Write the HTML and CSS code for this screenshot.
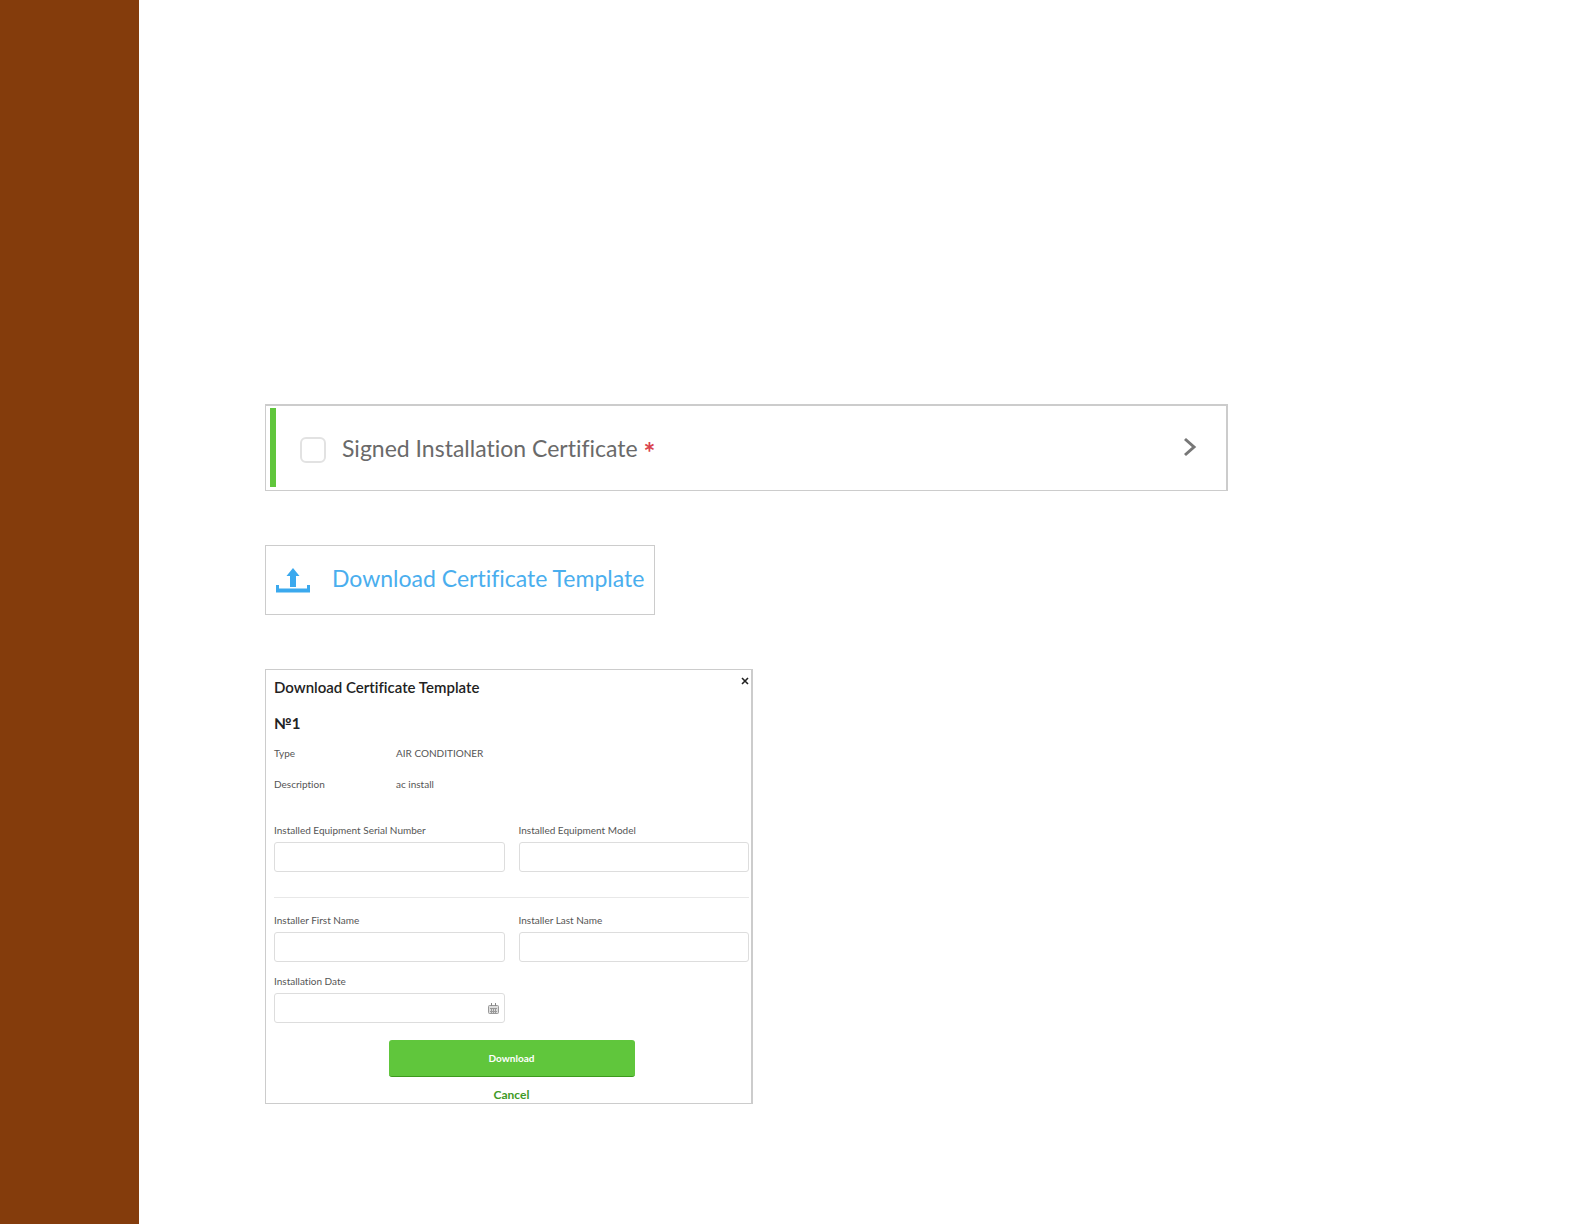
FILE: index.html
```html
<!DOCTYPE html>
<html lang="en">
<head>
<meta charset="utf-8">
<title>Download Certificate Template</title>
<link rel="stylesheet" href="styles.css">
</head>
<body>
<div class="page">
  <aside class="stripe"></aside>
  <main class="content">
    <section class="panel task">
      <span class="task-mark"></span>
      <input class="task-check" type="checkbox" id="signed">
      <label class="task-label" for="signed">Signed Installation Certificate <span class="required">*</span></label>
      <button class="icon-button task-open" type="button" aria-label="Open">
        <svg width="14" height="20" viewBox="0 0 14 20"><path d="M2 2l9 8-9 8" fill="none" stroke="#777" stroke-width="3"/></svg>
      </button>
    </section>

    <section class="panel template">
      <svg class="template-icon" width="34" height="26" viewBox="0 0 34 26" fill="#3ba9ee"><path d="M17 1l6.500 8H20v11h-6V9h-3.500z"/><path d="M0 18h3v3.500h28V18h3v7.500H0z"/></svg>
      <a class="template-link" href="#download-form">Download Certificate Template</a>
    </section>

    <form class="panel dialog" id="download-form">
      <header class="dialog-head">
        <h1 class="heading">Download Certificate Template</h1>
        <button class="icon-button dialog-close" type="button" aria-label="Close">
          <svg width="8" height="8" viewBox="0 0 8 8"><path d="M1 1l6 6M7 1L1 7" stroke="#222" stroke-width="1.600"/></svg>
        </button>
      </header>
      <h2 class="heading number">№1</h2>
      <dl class="facts">
        <dt>Type</dt><dd>AIR CONDITIONER</dd>
        <dt>Description</dt><dd>ac install</dd>
      </dl>
      <div class="fields equipment">
        <div class="field"><label for="serial">Installed Equipment Serial Number</label><input class="box" id="serial" type="text"></div>
        <div class="field"><label for="model">Installed Equipment Model</label><input class="box" id="model" type="text"></div>
      </div>
      <div class="fields installer">
        <div class="field"><label for="first">Installer First Name</label><input class="box" id="first" type="text"></div>
        <div class="field"><label for="last">Installer Last Name</label><input class="box" id="last" type="text"></div>
        <div class="field">
          <label for="date">Installation Date</label>
          <div class="box date">
            <input class="date-input" id="date" type="text">
            <button class="icon-button" type="button" aria-label="Choose date">
              <svg width="11" height="11" viewBox="0 0 11 11"><rect x="0.500" y="2.500" width="10" height="8" rx="1" fill="#ddd" stroke="#999"/><path d="M3.500 0v3M7.500 0v3" stroke="#888"/><path d="M2 5.500h7M2 8.500h7M3.500 5v5M5.500 5v5M7.500 5v5" stroke="#999"/></svg>
            </button>
          </div>
        </div>
      </div>
      <div class="actions">
        <button class="download" type="submit">Download</button>
        <button class="cancel" type="button">Cancel</button>
      </div>
    </form>
  </main>
</div>
</body>
</html>
```
FILE: styles.css
```css
* { box-sizing: border-box; }
body {
  margin: 0;
  background: #fff;
  color: #555;
  font: 10px/16px Lato, "Open Sans", sans-serif;
  font-variant-ligatures: no-common-ligatures;
}
h1, h2, dl, dd { margin: 0; }
button { font-family: inherit; cursor: pointer; }
.page { display: flex; min-height: 100vh; }
.stripe { flex: none; width: 139px; background: #843c0c; }
.content {
  flex: 1;
  display: flex;
  flex-direction: column;
  align-items: flex-start;
  gap: 54px;
  padding: 404px 126px 120px;
}
.panel { border: 1px solid #ccc; max-width: 100%; }
.icon-button { display: flex; padding: 0; border: 0; background: none; }

.task {
  display: flex;
  align-items: center;
  width: 963px;
  padding: 2px 29px 3px 4px;
  border-top-width: 2px;
  border-right-width: 2px;
}
.task-mark { width: 6px; height: 79px; background: #60c63c; }
.task-check {
  appearance: none;
  width: 26px;
  height: 26px;
  margin: 4px 16px 0 24px;
  border: 2px solid #e2e2e2;
  border-radius: 6px;
  background: #fff;
}
.task-label { flex: 1; font-size: 23px; line-height: 32px; color: #6a6a6a; }
.task-open { padding-bottom: 2px; }
.required {
  color: #d9434e;
  font-size: 28px;
  font-weight: 700;
  line-height: 0;
  vertical-align: sub;
}

.template {
  display: flex;
  align-items: center;
  gap: 22px;
  width: 390px;
  height: 70px;
  padding: 0 8px 0 10px;
}
.template-icon { flex: none; }
.template-link {
  padding-bottom: 4px;
  font-size: 23px;
  line-height: 32px;
  color: #4aaeee;
  text-decoration: none;
  white-space: nowrap;
}

.dialog { width: 488px; padding: 7px 2px 0 8px; border-right-width: 2px; }
.dialog-head { display: flex; justify-content: space-between; align-items: flex-start; }
.heading { font-size: 15px; line-height: 20px; font-weight: 600; color: #222; }
.number { margin-top: 16px; font-weight: 700; }
.facts { display: grid; grid-template-columns: 122px 1fr; row-gap: 15px; margin-top: 12px; }
.fields { display: grid; grid-template-columns: 1fr 1fr; gap: 11px 14px; }
.equipment { padding: 30px 0 25px; border-bottom: 1px solid #e8e8e8; }
.installer { padding: 14px 0 17px; }
.field label { display: block; margin-bottom: 4px; }
.box {
  display: block;
  width: 100%;
  height: 30px;
  padding: 0 5px;
  border: 1px solid #ddd;
  border-radius: 3px;
  background: #fff;
  font: inherit;
}
.date { display: flex; align-items: center; }
.date-input { flex: 1; min-width: 0; border: 0; font: inherit; outline: 0; }
.actions { display: flex; flex-direction: column; align-items: center; }
.download {
  width: 246px;
  height: 37px;
  border: 0;
  border-bottom: 1px solid #3c9a1c;
  border-radius: 3px;
  background: #60c63c;
  color: #fff;
  font-size: 10px;
  font-weight: 700;
}
.cancel {
  margin-top: 10px;
  padding: 0;
  border: 0;
  background: none;
  color: #3f9a26;
  font-size: 12px;
  line-height: 16px;
  font-weight: 700;
}
```
